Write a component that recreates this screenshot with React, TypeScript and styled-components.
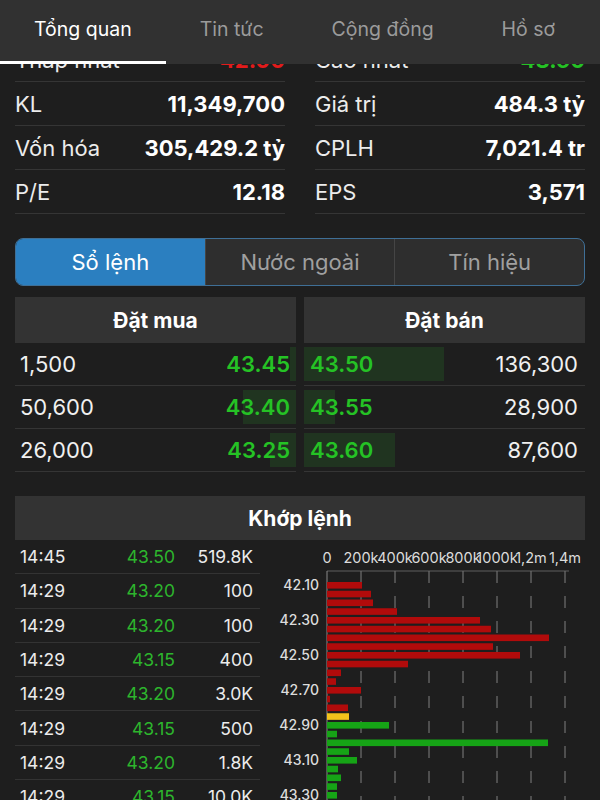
import React from 'react';
import styled, { createGlobalStyle } from 'styled-components';

const GlobalStyle = createGlobalStyle`
  body {
    margin: 0;
    background: #1e1e1e;
    font-family: Inter, "Noto Sans", sans-serif;
  }
`;

const GREEN = '#25c225';
const RED = '#e21b1b';

const S = {
  Screen: styled.div`
    width: 600px;
    height: 800px;
    overflow: hidden;
    background: #1e1e1e;
    color: #f2f2f2;
  `,
  TabBar: styled.div`
    position: relative;
    z-index: 2; // phủ lên nội dung đang cuộn
    display: flex;
    height: 64px;
    background: #313131;
    white-space: nowrap;
  `,
  Tab: styled.div<{ $active?: boolean }>`
    position: relative;
    display: flex;
    align-items: center;
    padding: 0 34px 6px;
    font-size: 19.5px;
    color: ${(p) => (p.$active ? '#ffffff' : '#9b9b9b')};

    &::after {
      content: '';
      display: ${(p) => (p.$active ? 'block' : 'none')};
      position: absolute;
      left: 0;
      right: 0;
      bottom: 0;
      height: 3px;
      background: #ffffff;
    }
  `,
  Content: styled.div`
    margin-top: -26px;
    padding: 0 15px;
  `,
  StatsGrid: styled.div`
    display: grid;
    grid-template-columns: 1fr 1fr;
    column-gap: 30px;
  `,
  StatRow: styled.div`
    display: flex;
    justify-content: space-between;
    align-items: center;
    height: 43px;
    border-bottom: 1px solid #353535;
    font-size: 22px;
  `,
  StatLabel: styled.span`
    color: #ececec;
  `,
  StatValue: styled.span<{ $color?: string }>`
    font-weight: 700;
    color: ${(p) => p.$color || '#ffffff'};
  `,
  Segmented: styled.div`
    display: flex;
    margin-top: 24px;
    height: 46px;
    border: 1px solid #3f6f96;
    border-radius: 8px;
    overflow: hidden;
    background: #2e2e2e;
  `,
  Segment: styled.div<{ $active?: boolean }>`
    flex: 1;
    display: flex;
    align-items: center;
    justify-content: center;
    font-size: 22px;
    color: ${(p) => (p.$active ? '#ffffff' : '#a0a0a0')};
    background: ${(p) => (p.$active ? '#2b7fc0' : 'transparent')};
    & + & {
      border-left: 1px solid #454545;
    }
  `,
  Book: styled.div`
    display: grid;
    grid-template-columns: 1fr 1fr;
    column-gap: 8px;
    margin-top: 11px;
  `,
  SectionHeader: styled.div<{ $h?: number }>`
    display: flex;
    align-items: center;
    justify-content: center;
    height: ${(p) => p.$h || 44}px;
    background: #333333;
    font-size: 21px;
    font-weight: 700;
    color: #ffffff;
  `,
  BookRow: styled.div<{ $side: 'bid' | 'ask' }>`
    position: relative;
    display: flex;
    justify-content: space-between;
    align-items: center;
    height: 42px;
    padding: ${(p) => (p.$side === 'bid' ? '0 6px 0 5px' : '0 7px 0 6px')};
    border-bottom: 1px solid #353535;
    font-size: 22px;
  `,
  DepthBar: styled.div<{ $side: 'bid' | 'ask' }>`
    position: absolute;
    top: 4px;
    bottom: 4px;
    ${(p) => (p.$side === 'bid' ? 'right: 0;' : 'left: 0;')}
    background: rgba(40, 130, 40, 0.22);
  `,
  Volume: styled.span`
    position: relative;
    color: #f0f0f0;
  `,
  Price: styled.span`
    position: relative;
    font-weight: 600;
    color: ${GREEN};
  `,
  Matched: styled.div`
    margin-top: 24px;
  `,
  MatchedBody: styled.div`
    display: grid;
    grid-template-columns: 245px 1fr;
  `,
  TradeList: styled.div`
    display: flex;
    flex-direction: column;
  `,
  TradeRow: styled.div`
    display: grid;
    grid-template-columns: 70px 90px 78px;
    align-items: center;
    height: 33.3px;
    padding-left: 5px;
    border-bottom: 1px solid #333333;
    font-size: 17.5px;
    color: #ececec;
  `,
  TradeCell: styled.span<{ $align?: 'left' | 'right'; $color?: string }>`
    text-align: ${(p) => p.$align || 'left'};
    color: ${(p) => p.$color || 'inherit'};
    padding-right: ${(p) => (p.$align === 'right' ? '5px' : '0')};
  `,
  ChartWrap: styled.div`
    padding-left: 2px;
    svg {
      display: block;
    }
  `,
};

const stats = [
  ['Thấp nhất', '42.00', RED, 'Cao nhất', '43.60', GREEN],
  ['KL', '11,349,700', '', 'Giá trị', '484.3 tỷ', ''],
  ['Vốn hóa', '305,429.2 tỷ', '', 'CPLH', '7,021.4 tr', ''],
  ['P/E', '12.18', '', 'EPS', '3,571', ''],
];

const bids = [
  { vol: '1,500', price: '43.45', bar: 6 },
  { vol: '50,600', price: '43.40', bar: 53 },
  { vol: '26,000', price: '43.25', bar: 26 },
];

const asks = [
  { price: '43.50', vol: '136,300', bar: 140 },
  { price: '43.55', vol: '28,900', bar: 31 },
  { price: '43.60', vol: '87,600', bar: 91 },
];

const trades = [
  ['14:45', '43.50', '519.8K'],
  ['14:29', '43.20', '100'],
  ['14:29', '43.20', '100'],
  ['14:29', '43.15', '400'],
  ['14:29', '43.20', '3.0K'],
  ['14:29', '43.15', '500'],
  ['14:29', '43.20', '1.8K'],
  ['14:29', '43.15', '10.0K'],
];

// độ dài cột theo giá, bắt đầu từ 42.10, bước 0.05
const volumeBars = [
  35, 44, 46, 70, 153, 164, 222, 166, 193, 81, 14, 9, 34, 3, 21, 22, 62, 10, 221, 22, 30, 11, 14,
  10, 10, 19, 8,
];

function VolumeChart() {
  const x0 = 65;
  const step = 34;
  const top = 42;
  const pitch = 8.75;
  const ticks = ['0', '200k', '400k', '600k', '800k', '1000k', '1,2m', '1,4m'];
  const colorOf = (i: number) => (i < 15 ? '#b10b0b' : i === 15 ? '#f2c21b' : '#16a416');

  return (
    <svg width="336" height="262" viewBox="0 0 336 262">
      {ticks.map((t, i) => (
        <text
          key={t}
          x={x0 + i * step}
          y={23}
          textAnchor="middle"
          fontSize="14.5"
          fill="#dcdcdc"
          fontFamily="Inter, sans-serif"
        >
          {t}
        </text>
      ))}
      <line x1={x0} y1={31} x2={x0 + 7 * step + 4} y2={31} stroke="#5e5e5e" strokeWidth="1" />
      {ticks.slice(1).map((t, i) => (
        <line
          key={t}
          x1={x0 + (i + 1) * step}
          y1={31}
          x2={x0 + (i + 1) * step}
          y2={262}
          stroke="#707070"
          strokeWidth="1.2"
          strokeDasharray="12 13"
        />
      ))}
      <line x1={x0} y1={31} x2={x0} y2={262} stroke="#8a8a8a" strokeWidth="1" />
      {volumeBars.map((w, i) => (
        <rect key={i} x={x0} y={top + i * pitch} width={w} height={6.6} fill={colorOf(i)} />
      ))}
      {['42.10', '42.30', '42.50', '42.70', '42.90', '43.10', '43.30'].map((label, i) => (
        <text
          key={label}
          x={57}
          y={top + i * 4 * pitch + 8}
          textAnchor="end"
          fontSize="14"
          fontWeight="500"
          fill="#dcdcdc"
          fontFamily="Inter, sans-serif"
        >
          {label}
        </text>
      ))}
    </svg>
  );
}

export default function App() {
  return (
    <S.Screen>
      <GlobalStyle />
      <S.TabBar>
        <S.Tab $active>Tổng quan</S.Tab>
        <S.Tab>Tin tức</S.Tab>
        <S.Tab>Cộng đồng</S.Tab>
        <S.Tab>Hồ sơ</S.Tab>
      </S.TabBar>

      <S.Content>
        <S.StatsGrid>
          {stats.map((r) => (
            <React.Fragment key={r[0]}>
              <S.StatRow>
                <S.StatLabel>{r[0]}</S.StatLabel>
                <S.StatValue $color={r[2]}>{r[1]}</S.StatValue>
              </S.StatRow>
              <S.StatRow>
                <S.StatLabel>{r[3]}</S.StatLabel>
                <S.StatValue $color={r[5]}>{r[4]}</S.StatValue>
              </S.StatRow>
            </React.Fragment>
          ))}
        </S.StatsGrid>

        <S.Segmented>
          <S.Segment $active>Sổ lệnh</S.Segment>
          <S.Segment>Nước ngoài</S.Segment>
          <S.Segment>Tín hiệu</S.Segment>
        </S.Segmented>

        <S.Book>
          <div>
            <S.SectionHeader $h={46}>Đặt mua</S.SectionHeader>
            {bids.map((b) => (
              <S.BookRow $side="bid" key={b.price}>
                <S.DepthBar $side="bid" style={{ width: b.bar }} />
                <S.Volume>{b.vol}</S.Volume>
                <S.Price>{b.price}</S.Price>
              </S.BookRow>
            ))}
          </div>
          <div>
            <S.SectionHeader $h={46}>Đặt bán</S.SectionHeader>
            {asks.map((a) => (
              <S.BookRow $side="ask" key={a.price}>
                <S.DepthBar $side="ask" style={{ width: a.bar }} />
                <S.Price>{a.price}</S.Price>
                <S.Volume>{a.vol}</S.Volume>
              </S.BookRow>
            ))}
          </div>
        </S.Book>

        <S.Matched>
          <S.SectionHeader>Khớp lệnh</S.SectionHeader>
          <S.MatchedBody>
            <S.TradeList>
              {trades.map((t, i) => (
                <S.TradeRow key={i}>
                  <S.TradeCell>{t[0]}</S.TradeCell>
                  <S.TradeCell $align="right" $color="#2db52d">
                    {t[1]}
                  </S.TradeCell>
                  <S.TradeCell $align="right">{t[2]}</S.TradeCell>
                </S.TradeRow>
              ))}
            </S.TradeList>
            <S.ChartWrap>
              <VolumeChart />
            </S.ChartWrap>
          </S.MatchedBody>
        </S.Matched>
      </S.Content>
    </S.Screen>
  );
}
